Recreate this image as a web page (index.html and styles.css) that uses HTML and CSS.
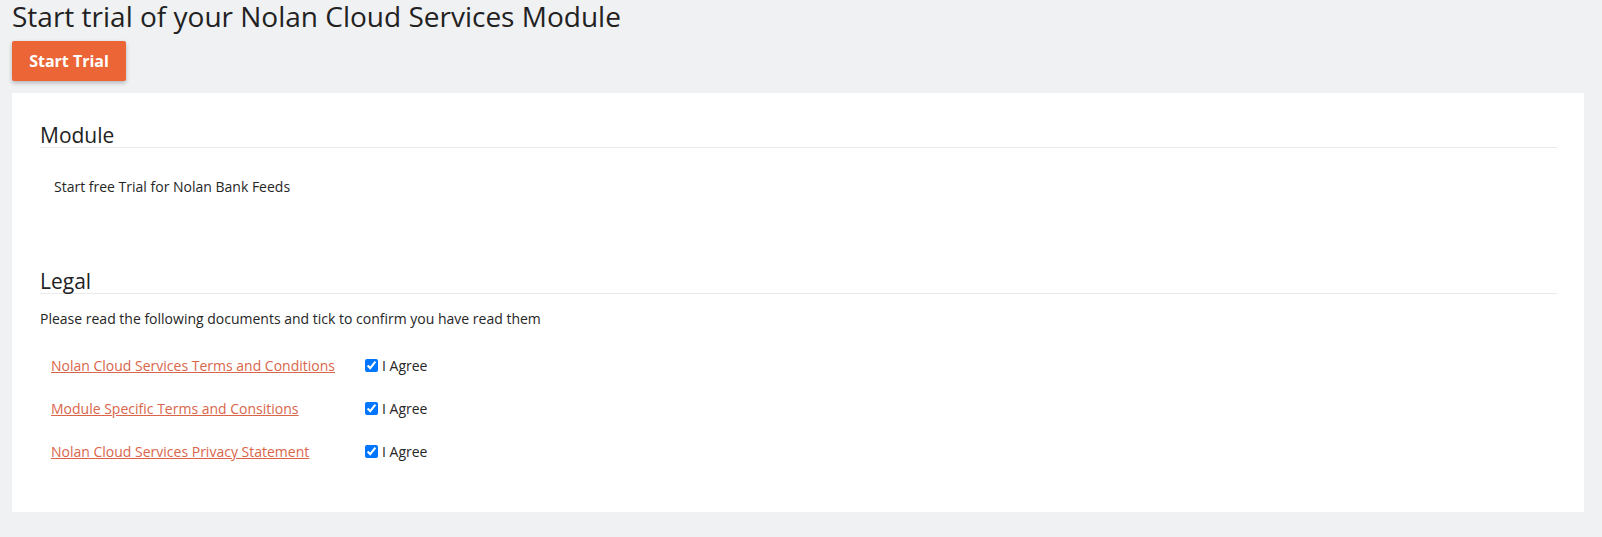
FILE: index.html
```html
<!DOCTYPE html>
<html lang="en">
<head>
    <meta charset="UTF-8">
    <meta name="viewport" content="width=device-width, initial-scale=1.0">
    <title>Start Trial</title>
    <link rel="stylesheet" href="styles.css">
</head>
<body>
    <h1 class="page-title">Start trial of your Nolan Cloud Services Module</h1>
    <div class="actions">
        <button class="button">Start Trial</button>
    </div>

    <div class="panel">
        <div class="section">
            <h2 class="section-title">Module</h2>
            <p class="module-name">Start free Trial for Nolan Bank Feeds</p>
        </div>

        <div class="section legal">
            <h2 class="section-title">Legal</h2>
            <p class="intro">Please read the following documents and tick to confirm you have read them</p>

            <div class="doc-list">
                <div class="doc-row">
                    <a href="#" class="doc-link">Nolan Cloud Services Terms and Conditions</a>
                    <label class="agree"><input type="checkbox" checked> I Agree</label>
                </div>
                <div class="doc-row">
                    <a href="#" class="doc-link">Module Specific Terms and Consitions</a>
                    <label class="agree"><input type="checkbox" checked> I Agree</label>
                </div>
                <div class="doc-row">
                    <a href="#" class="doc-link">Nolan Cloud Services Privacy Statement</a>
                    <label class="agree"><input type="checkbox" checked> I Agree</label>
                </div>
            </div>
        </div>
    </div>
</body>
</html>
```

FILE: styles.css
```css
body {
    font-family: "Open Sans", Arial, sans-serif;
    margin: 0;
    background-color: #f0f1f3;
    color: #262626;
}
.page-title {
    font-size: 28px;
    font-weight: 400;
    line-height: 32px;
    margin: 0;
    padding: 0 12px;
    color: #222;
}
.actions {
    padding: 9px 12px 12px;
}
.button {
    font-family: inherit;
    background-color: #ec6536;
    color: white;
    font-size: 16px;
    font-weight: 700;
    width: 114px;
    height: 40px;
    border: none;
    border-radius: 2px;
    box-shadow: 0 2px 4px rgba(0,0,0,0.25);
    cursor: pointer;
}
.panel {
    background: white;
    margin: 0 18px 0 12px;
    padding: 30px 27px 39px 28px;
}
.section-title {
    font-size: 21px;
    font-weight: 400;
    line-height: 24px;
    margin: 0;
    border-bottom: 1px solid #ebebeb;
    color: #222;
}
.module-name {
    font-size: 14px;
    margin: 29px 0 0 14px;
    line-height: 20px;
}
.legal {
    margin-top: 72px;
}
.intro {
    font-size: 14px;
    line-height: 20px;
    margin: 15px 0 0;
}
.doc-list {
    margin-top: 15px;
}
.doc-row {
    display: flex;
    align-items: center;
    height: 43px;
    padding-left: 11px;
    font-size: 14px;
}
.doc-link {
    color: #d9654a;
    width: 314px;
}
.agree {
    display: flex;
    align-items: center;
    gap: 4px;
}
.agree input {
    margin: 0;
    width: 13px;
    height: 13px;
}
```
